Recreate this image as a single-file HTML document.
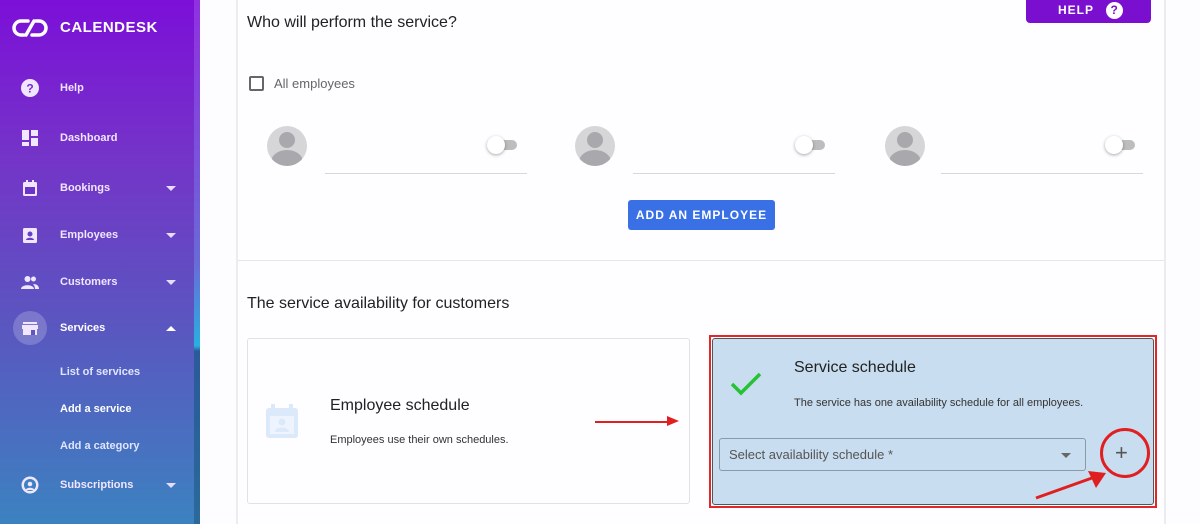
<!DOCTYPE html>
<html><head><style>
*{margin:0;padding:0;box-sizing:border-box}
body{width:1200px;height:524px;overflow:hidden;font-family:"Liberation Sans",sans-serif;background:#fdfcfe;position:relative}
.sb{position:absolute;left:0;top:0;width:200px;height:524px;background:linear-gradient(180deg,#7c0fd8 0%,#7434c8 30%,#5c54c0 60%,#3c82c0 100%)}
.sb .scr{position:absolute;left:194px;top:0;width:6px;height:524px;background:linear-gradient(180deg,#9030e0 0%,#6a6ad8 50%,#28b0e0 66%,#2a5a9a 67%,#2a6a9a 100%)}
.logo{position:absolute;left:60px;top:19px;color:#fff;font-weight:bold;font-size:15px;letter-spacing:0.5px}
.it{position:absolute;left:60px;color:#f1e6ff;font-size:11px;font-weight:bold}
.ic{position:absolute;left:21px;width:18px;height:18px}
.car{position:absolute;left:166px;width:0;height:0;border-left:5px solid transparent;border-right:5px solid transparent;border-top:5px solid #e8dcff}
.main{position:absolute;left:236px;top:0;width:930px;height:524px;border-left:2px solid #ececf0;border-right:2px solid #ececf0;background:#fefdff}
.t{position:absolute;color:#222;font-size:16px}
.tog{position:absolute;width:26px;height:10px;border-radius:5px;background:#bdbdbd}
.tog:before{content:"";position:absolute;left:-4px;top:-4px;width:18px;height:18px;border-radius:50%;background:#fff;box-shadow:0 1px 3px rgba(0,0,0,.35)}
.av{position:absolute;width:40px;height:40px;border-radius:50%;background:#d6d6d8;overflow:hidden}
.av:before{content:"";position:absolute;left:12px;top:6px;width:16px;height:16px;border-radius:50%;background:#a9a9ad}
.av:after{content:"";position:absolute;left:4px;top:24px;width:32px;height:24px;border-radius:50% 50% 0 0;background:#a9a9ad}
.ln{position:absolute;height:1px;background:#d8d8d8}
</style></head><body>
<div class="sb">
<div class="scr"></div>
<svg style="position:absolute;left:12px;top:18px" width="36" height="20" viewBox="0 0 36 20"><path d="M16 3H9a7 7 0 0 0 0 14h3M20 17h7a7 7 0 0 0 0-14h-3M14 17l8-14" stroke="#fff" stroke-width="3.5" fill="none" stroke-linecap="round"/></svg>
<div class="logo">CALENDESK</div>
<svg class="ic" style="top:79px" viewBox="0 0 18 18"><circle cx="9" cy="9" r="9" fill="#f1e6ff"/><text x="9" y="13.5" font-size="12" font-weight="bold" text-anchor="middle" fill="#7a2ad0" font-family="Liberation Sans">?</text></svg>
<div class="it" style="top:82px">Help</div>
<svg class="ic" style="top:129px" viewBox="0 0 18 18" fill="#f1e6ff"><rect x="1" y="1" width="7" height="10"/><rect x="10" y="1" width="7" height="6"/><rect x="1" y="13" width="7" height="4"/><rect x="10" y="9" width="7" height="8"/></svg>
<div class="it" style="top:132px">Dashboard</div>
<svg class="ic" style="top:179px" viewBox="0 0 18 18"><rect x="2" y="3" width="14" height="14" rx="1.5" fill="#f1e6ff"/><rect x="4" y="8" width="10" height="7" fill="#6a35c8"/><rect x="5" y="1" width="2" height="4" fill="#f1e6ff"/><rect x="11" y="1" width="2" height="4" fill="#f1e6ff"/></svg>
<div class="it" style="top:182px">Bookings</div><div class="car" style="top:186px"></div>
<svg class="ic" style="top:226px" viewBox="0 0 18 18"><rect x="2" y="2" width="14" height="15" rx="1.5" fill="#f1e6ff"/><circle cx="9" cy="8" r="2.5" fill="#6440c4"/><path d="M5 14c0-3 8-3 8 0z" fill="#6440c4"/></svg>
<div class="it" style="top:229px">Employees</div><div class="car" style="top:233px"></div>
<svg class="ic" style="top:273px" viewBox="0 0 18 18" fill="#f1e6ff"><circle cx="6.5" cy="6" r="3"/><circle cx="12.5" cy="6" r="2.5"/><path d="M0 16c0-5 13-5 13 0z"/><path d="M12 11c4 0 6 2 6 5h-4c0-2-1-4-2-5z"/></svg>
<div class="it" style="top:276px">Customers</div><div class="car" style="top:280px"></div>
<div style="position:absolute;left:13px;top:311px;width:34px;height:34px;border-radius:50%;background:rgba(255,255,255,.2)"></div>
<svg class="ic" style="top:319px" viewBox="0 0 18 18" fill="#f1e6ff"><rect x="2" y="3" width="14" height="2"/><rect x="1" y="6" width="16" height="4"/><rect x="2" y="10" width="14" height="6"/><rect x="10" y="11" width="4" height="5" fill="#5d58bf"/></svg>
<div class="it" style="top:322px;color:#fff">Services</div>
<div class="car" style="top:326px;border-top:0;border-bottom:5px solid #fff"></div>
<div class="it" style="top:366px;font-weight:bold;color:#dfe6ff">List of services</div>
<div class="it" style="top:403px;color:#fff">Add a service</div>
<div class="it" style="top:440px;color:#dfe6ff">Add a category</div>
<svg class="ic" style="top:476px" viewBox="0 0 18 18"><circle cx="9" cy="9" r="8.5" fill="#f1e6ff"/><circle cx="9" cy="9" r="6" fill="#3f80c0"/><circle cx="9" cy="8" r="2.3" fill="#f1e6ff"/><path d="M4.5 14c1-3 8-3 9 0z" fill="#f1e6ff"/></svg>
<div class="it" style="top:479px">Subscriptions</div><div class="car" style="top:483px"></div>
</div>

<div class="main">
<div class="t" style="left:9px;top:14px">Who will perform the service?</div>
<div style="position:absolute;left:11px;top:76px;width:15px;height:15px;border:2px solid #666;border-radius:2px"></div>
<div style="position:absolute;left:36px;top:76px;font-size:13px;color:#666">All employees</div>
<div class="av" style="left:29px;top:126px"></div><div class="ln" style="left:87px;top:173px;width:202px"></div><div class="tog" style="left:253px;top:140px"></div>
<div class="av" style="left:337px;top:126px"></div><div class="ln" style="left:395px;top:173px;width:202px"></div><div class="tog" style="left:561px;top:140px"></div>
<div class="av" style="left:647px;top:126px"></div><div class="ln" style="left:703px;top:173px;width:202px"></div><div class="tog" style="left:871px;top:140px"></div>
<div style="position:absolute;left:390px;top:200px;width:147px;height:30px;background:#3a70e6;border-radius:3px;color:#fff;font-size:12px;font-weight:bold;letter-spacing:1px;text-align:center;line-height:30px">ADD AN EMPLOYEE</div>
<div style="position:absolute;left:788px;top:0;width:125px;height:23px;background:#7a0fd0;border-radius:0 0 4px 4px;color:#fff;font-size:12px;font-weight:bold;letter-spacing:1px;line-height:21px;padding-left:32px">HELP <span style="display:inline-block;width:17px;height:17px;border-radius:50%;background:#fff;color:#7a0fd0;text-align:center;line-height:17px;margin-left:8px;font-size:12px">?</span></div>
<div class="ln" style="left:0;top:260px;width:926px;background:#e6e6ea"></div>
<div class="t" style="left:9px;top:295px">The service availability for customers</div>
<div style="position:absolute;left:9px;top:338px;width:443px;height:166px;border:1px solid #e2e2e6;border-radius:3px;background:#fefdff"></div>
<svg style="position:absolute;left:27px;top:404px" width="34" height="36" viewBox="0 0 34 36"><rect x="1" y="4" width="32" height="30" rx="3" fill="#dbe9fb"/><rect x="6" y="0" width="4" height="8" fill="#dbe9fb"/><rect x="24" y="0" width="4" height="8" fill="#dbe9fb"/><rect x="5" y="12" width="24" height="18" fill="#eef4fd"/><circle cx="17" cy="18" r="3.5" fill="#dbe9fb"/><path d="M10 28c0-6 14-6 14 0z" fill="#dbe9fb"/></svg>
<div class="t" style="left:92px;top:397px">Employee schedule</div>
<div style="position:absolute;left:92px;top:434px;font-size:11px;color:#333">Employees use their own schedules.</div>
<div style="position:absolute;left:357px;top:421px;width:78px;height:2px;background:#e02020"></div>
<div style="position:absolute;left:429px;top:416px;border-left:12px solid #e02020;border-top:5px solid transparent;border-bottom:5px solid transparent"></div>
<div style="position:absolute;left:471px;top:335px;width:448px;height:173px;border:2px solid #e02828"></div>
<div style="position:absolute;left:474px;top:338px;width:442px;height:167px;background:#c8ddef;border:1px solid #555;border-radius:3px"></div>
<svg style="position:absolute;left:492px;top:372px" width="32" height="24" viewBox="0 0 32 24"><path d="M2 12l9 9L30 2" stroke="#25c234" stroke-width="3.5" fill="none"/></svg>
<div class="t" style="left:556px;top:359px">Service schedule</div>
<div style="position:absolute;left:556px;top:397px;font-size:11px;color:#333">The service has one availability schedule for all employees.</div>
<div style="position:absolute;left:481px;top:438px;width:367px;height:33px;border:1px solid #8a9aa8;border-radius:3px"></div>
<div style="position:absolute;left:491px;top:447px;font-size:13px;color:#555">Select availability schedule *</div>
<div style="position:absolute;left:823px;top:453px;border-left:5px solid transparent;border-right:5px solid transparent;border-top:5px solid #666"></div>
<div style="position:absolute;left:862px;top:428px;width:50px;height:50px;border:3px solid #e02020;border-radius:50%"></div>
<div style="position:absolute;left:877px;top:440px;font-size:22px;color:#555;font-weight:300">+</div>
<svg style="position:absolute;left:794px;top:470px" width="80" height="40" viewBox="0 0 80 40"><path d="M4 28L60 8" stroke="#e02020" stroke-width="3"/><path d="M74 3L56 1l8 17z" fill="#e02020"/></svg>
</div>
</body></html>
